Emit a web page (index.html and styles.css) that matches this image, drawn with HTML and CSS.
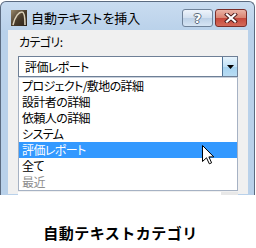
FILE: index.html
```html
<!DOCTYPE html>
<html lang="ja">
<head>
    <meta charset="UTF-8">
    <meta name="viewport" content="width=device-width, initial-scale=1.0">
    <title>自動テキストカテゴリ</title>
    <link rel="stylesheet" href="styles.css">
</head>
<body>
    <div class="window">
        <div class="titlebar">
            <svg class="app-icon" width="16" height="16" viewBox="0 0 16 16">
                <defs>
                    <linearGradient id="ig" x1="0" y1="0" x2="1" y2="1">
                        <stop offset="0" stop-color="#9a8a6c"/>
                        <stop offset="0.5" stop-color="#4a3d2c"/>
                        <stop offset="1" stop-color="#2a2118"/>
                    </linearGradient>
                </defs>
                <rect x="0" y="0" width="16" height="16" fill="url(#ig)"/>
                <path d="M2 15 C4 6 8 2 11 2 C13 2 14 6 14 15" fill="none" stroke="#d9cfb8" stroke-width="1.6"/>
            </svg>
            <span class="title">自動テキストを挿入</span>
            <div class="caption-buttons">
                <div class="cap-btn help">?</div>
                <div class="cap-btn close">
                    <svg width="14" height="10" viewBox="0 0 14 10">
                        <path d="M3 1.5 L11 8.5 M11 1.5 L3 8.5" stroke="#4a1a1a" stroke-width="4" stroke-linecap="square"/>
                        <path d="M3 1.5 L11 8.5 M11 1.5 L3 8.5" stroke="#ffffff" stroke-width="2.2" stroke-linecap="square"/>
                    </svg>
                </div>
            </div>
        </div>

        <div class="client">
            <div class="field-label">カテゴリ:</div>
            <div class="combo">
                <span class="combo-value">評価レポート</span>
                <span class="combo-arrow">
                    <svg width="7" height="4" viewBox="0 0 7 4"><path d="M0 0 H7 L3.5 4 Z" fill="#000"/></svg>
                </span>
            </div>
            <ul class="dropdown-list">
                <li>プロジェクト/敷地の詳細</li>
                <li>設計者の詳細</li>
                <li>依頼人の詳細</li>
                <li>システム</li>
                <li class="selected">評価レポート</li>
                <li>全て</li>
                <li class="disabled">最近</li>
            </ul>
            <div class="next-field"><span class="scroll-stub"></span></div>

            <!-- mouse pointer over the list -->
            <svg class="cursor" width="13" height="20" viewBox="0 0 13 20">
                <path d="M0.5 0.5 L0.5 16.5 L4.5 12.8 L7.3 18.8 L9.6 17.8 L6.9 11.9 L11.8 11.9 Z" fill="#fff" stroke="#000" stroke-width="1"/>
            </svg>
        </div>
    </div>

    <p class="caption">自動テキストカテゴリ</p>
</body>
</html>
```

FILE: styles.css
```css
* {
    margin: 0;
    padding: 0;
    box-sizing: border-box;
}

body {
    font-family: "Noto Sans CJK JP", "Noto Sans", sans-serif;
    background: #fff;
    width: 256px;
    height: 248px;
    overflow: hidden;
}

.window {
    margin-top: 1px;
    width: 255px;
    height: 194px;
    border: 1px solid #5b6b80;
    border-bottom: none;
    border-radius: 6px 6px 0 0;
    background: linear-gradient(#c9dcf0, #b9d1ea 30px);
    padding: 0 6px 0 7px;
    overflow: hidden;
}

.titlebar {
    height: 28px;
    padding-top: 4px;
    display: flex;
    align-items: center;
}

.app-icon {
    margin-left: 3px;
    flex-shrink: 0;
}

.title {
    margin-left: 4px;
    font-size: 13px;
    font-feature-settings: "palt";
    color: #000;
    line-height: 16px;
}

.caption-buttons {
    margin-left: auto;
    margin-right: 1px;
    display: flex;
    gap: 2px;
}

.cap-btn {
    height: 18px;
    border-radius: 3px;
    display: flex;
    align-items: center;
    justify-content: center;
}

.help {
    width: 31px;
    border: 1px solid #6f8299;
    background: linear-gradient(#eef4fb, #d2e0ef 50%, #bcd0e6 51%, #d6e5f4);
    font-family: "DejaVu Sans", sans-serif;
    font-weight: bold;
    font-size: 13px;
    color: #fff;
    text-shadow: 1px 0 #5a6a7c, -1px 0 #5a6a7c, 0 1px #5a6a7c, 0 -1px #5a6a7c;
}

.close {
    width: 32px;
    border: 1px solid #7a2e2a;
    background: linear-gradient(#eab3a6, #d98270 50%, #c5473a 51%, #d46a5a);
}

.client {
    position: relative;
    height: 164px;
    background: #f0f0f0;
    padding: 4px 10px 0 10px;
}

.field-label {
    padding-left: 1px;
    font-size: 12px;
    font-feature-settings: "palt";
    letter-spacing: -0.6px;
    line-height: 16px;
    color: #000;
}

.combo {
    margin-top: 6px;
    width: 220px;
    height: 21px;
    border: 1px solid #6e7f96;
    background: #fff;
    display: flex;
    align-items: stretch;
}

.combo-value {
    flex: 1;
    padding-left: 6px;
    font-size: 12px;
    font-feature-settings: "palt";
    letter-spacing: -0.6px;
    line-height: 19px;
}

.combo-arrow {
    width: 15px;
    border-left: 1px solid #4f7396;
    background: linear-gradient(#e6f3fc, #c2e2f7 50%, #a5d3f1 51%, #b9dcf3);
    display: flex;
    align-items: center;
    justify-content: center;
}

.dropdown-list {
    list-style: none;
    width: 220px;
    border: 1px solid #a6b2c4;
    border-top-color: #c9d1dc;
    background: #fff;
}

.dropdown-list li {
    height: 16px;
    padding-left: 3px;
    font-size: 12px;
    font-feature-settings: "palt";
    letter-spacing: -0.6px;
    line-height: 16px;
    color: #000;
}

.dropdown-list li.selected {
    background: #3399ff;
    color: #fff;
}

.dropdown-list li.disabled {
    color: #8d8d8d;
}

.next-field {
    margin-top: 1px;
    width: 220px;
    height: 10px;
    background: #fff;
    display: flex;
    justify-content: flex-end;
}

.scroll-stub {
    width: 17px;
    background: #e8e8e8;
}

.cursor {
    position: absolute;
    left: 194px;
    top: 115px;
}

.caption {
    margin-top: 29px;
    padding-right: 15px;
    text-align: center;
    font-size: 15px;
    font-weight: bold;
    letter-spacing: 0.5px;
    line-height: 18px;
    color: #000;
}
```
